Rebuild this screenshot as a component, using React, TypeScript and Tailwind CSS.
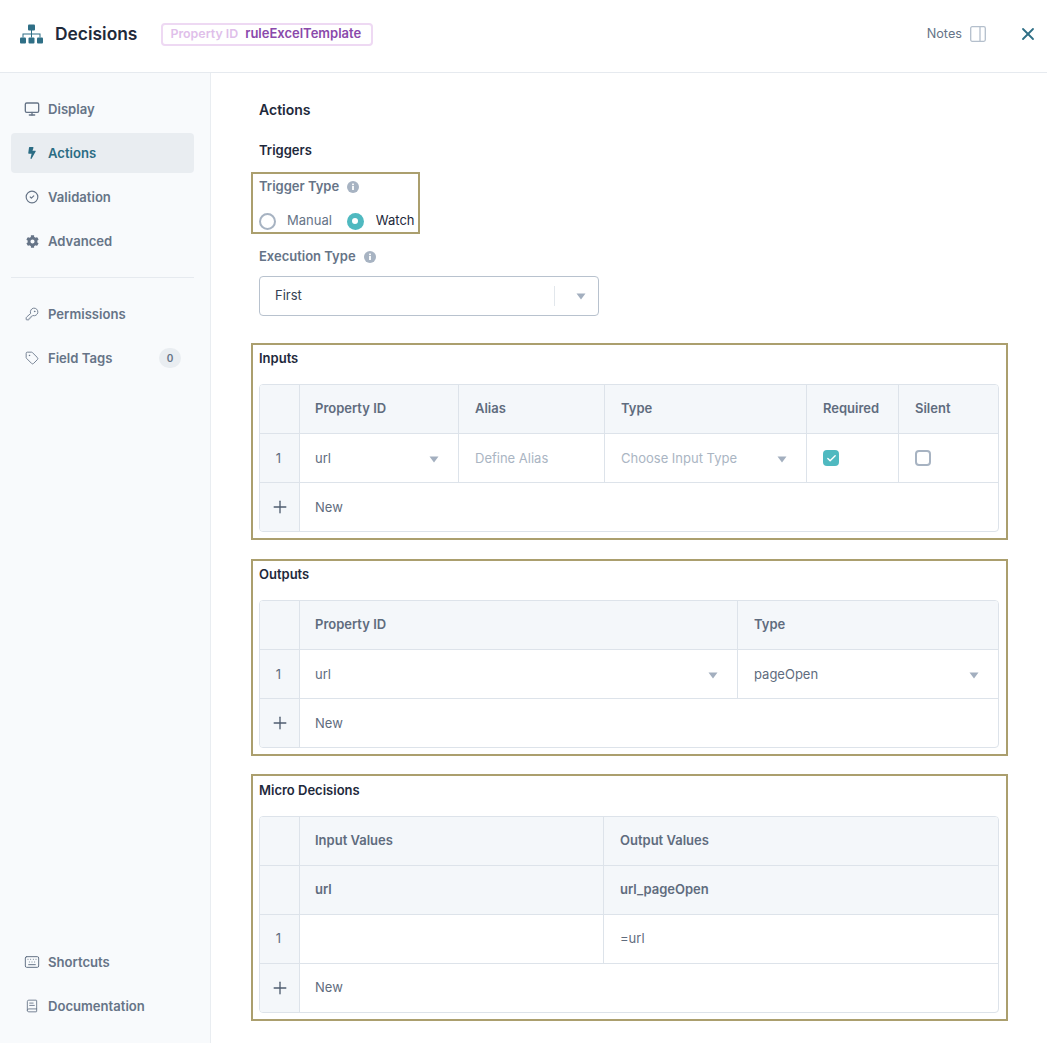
import React from "react";
import { Monitor, CircleCheck, KeyRound, Tag, Keyboard, BookText, X, Plus, Check } from "lucide-react";
import { FaCog, FaBolt } from "react-icons/fa";

function Caret({ className = "" }: { className?: string }) {
  return (
    <svg width="10" height="7" viewBox="0 0 10 7" className={className}>
      <path d="M0.5 0.5h9L5 6.500z" fill="#a3afbf" />
    </svg>
  );
}

function Info() {
  return (
    <svg width="12" height="12" viewBox="0 0 12 12">
      <circle cx="6" cy="6" r="6" fill="#a7b3c2" />
      <rect x="5.1" y="5" width="1.8" height="4" fill="#fff" />
      <rect x="5.1" y="2.6" width="1.8" height="1.6" fill="#fff" />
    </svg>
  );
}

function OrgIcon() {
  return (
    <svg width="23" height="20" viewBox="0 0 23 20" fill="#2f6f86">
      <rect x="8" y="0.5" width="7" height="6" rx="1" />
      <rect x="0" y="13.5" width="6" height="6" rx="1" />
      <rect x="8.5" y="13.5" width="6" height="6" rx="1" />
      <rect x="17" y="13.5" width="6" height="6" rx="1" />
      <path d="M11 6h1v3.5h8.5v4h-1V10.500H12v3h-1v-3H3.500v3h-1v-4H11z" />
    </svg>
  );
}

function NavItem({ icon, label, active, badge }: { icon: React.ReactNode; label: string; active?: boolean; badge?: string }) {
  return (
    <div className={`flex h-10 items-center rounded pl-[13px] pr-[13px] ${active ? "bg-[#e9edf1] text-[#2b6c84]" : "text-[#667487]"}`}>
      <span className="flex w-[16px] justify-center">{icon}</span>
      <span className="ml-[8px] flex-1 pt-[2px] text-[13.1px] font-semibold">{label}</span>
      {badge && (
        <span className="flex h-[20px] w-[22px] items-center justify-center rounded-full bg-[#e9edf1] text-[10px] font-semibold text-[#667487]">{badge}</span>
      )}
    </div>
  );
}

function Section({ title, children, className = "pt-[3px]" }: { title: string; children: React.ReactNode; className?: string }) {
  return (
    <section className={`-ml-[8px] -mr-[9px] border-2 border-[#ab9f6e] pb-[6px] pl-[6px] pr-[7px] ${className}`}>
      <h3 className="mb-[16px] text-[13px] font-semibold leading-[20px] text-[#1e293b]">{title}</h3>
      <div className="overflow-hidden rounded border border-[#dde3ea] text-[13px] text-[#5f6c7e]">{children}</div>
    </section>
  );
}

function Row({ children, last, index, head, flat }: { children?: React.ReactNode; last?: boolean; index?: React.ReactNode; head?: boolean; flat?: boolean }) {
  return (
    <div className={`flex ${last ? "h-[48px]" : "h-[49px] border-b border-[#dde3ea]"} ${head ? "bg-[#f4f7fa]" : ""}`}>
      <div className="flex w-[40px] shrink-0 items-center justify-center border-r border-[#dde3ea] bg-[#f4f7fa] text-[#5f6c7e]">
        {typeof index === "string" ? <span className={`pr-[2px] ${flat ? "" : "pt-[2px]"}`}>{index}</span> : index}
      </div>
      {children}
    </div>
  );
}

function Cell({ className = "", children, head, right, first, flat }: { className?: string; children?: React.ReactNode; head?: boolean; right?: boolean; first?: boolean; flat?: boolean }) {
  return (
    <div className={`flex items-center ${first ? "pl-[15px]" : "pl-[16px]"} ${right ? "border-r border-[#dde3ea]" : ""} ${head ? "font-semibold" : ""} ${head || flat ? "" : "pt-[2px]"} ${className}`}>{children}</div>
  );
}

function NewRow({ flat }: { flat?: boolean }) {
  return (
    <Row last index={<Plus size={20} strokeWidth={1.6} className="text-[#4f5d70]" />}>
      <Cell first flat={flat}>New</Cell>
    </Row>
  );
}

export default function App() {
  return (
    <div className="flex h-screen w-full flex-col overflow-hidden bg-white font-['Inter',sans-serif]">
      <header className="flex h-[73px] shrink-0 items-center border-b border-[#e6eaef] pb-[4px] pl-[20px] pr-[9px]">
        <OrgIcon />
        <h1 className="ml-[12px] text-[17.4px] font-semibold text-[#1f2a3a]">Decisions</h1>
        <div className="ml-[24px] flex h-[23px] items-center rounded border-2 border-[#eed9f3] pl-[7px] pr-[10px] font-semibold">
          <span className="text-[12.4px] text-[#e0bfea]">Property ID</span>
          <span className="ml-[7px] text-[13px] text-[#8a49ab]">ruleExcelTemplate</span>
        </div>
        <div className="ml-auto flex items-center text-[12.7px] text-[#667487]">
          Notes
          <svg width="16" height="16" viewBox="0 0 16 16" fill="none" stroke="#b4bfcc" strokeWidth="1.3" className="ml-[8px]">
            <rect x="0.7" y="0.7" width="14.6" height="14.6" rx="1.5" />
            <path d="M10 1v14" />
          </svg>
          <X size={20} strokeWidth={2.2} className="ml-[32px] text-[#2f6f86]" />
        </div>
      </header>

      <div className="flex min-h-0 flex-1">
        <aside className="flex w-[211px] shrink-0 flex-col border-r border-[#e9edf1] bg-[#f8fafc] pb-[17px] pl-[11px] pr-[16px] pt-[16px]">
          <nav className="flex flex-col gap-[4px]">
            <NavItem icon={<Monitor size={16} />} label="Display" />
            <NavItem active icon={<FaBolt size={12} />} label="Actions" />
            <NavItem icon={<CircleCheck size={14} />} label="Validation" />
            <NavItem icon={<FaCog size={13} />} label="Advanced" />
          </nav>
          <div className="my-[16px] border-t border-[#e6eaef]" />
          <nav className="flex flex-col gap-[4px]">
            <NavItem icon={<KeyRound size={14} strokeWidth={1.5} />} label="Permissions" />
            <NavItem icon={<Tag size={14} strokeWidth={1.5} />} label="Field Tags" badge="0" />
          </nav>
          <nav className="mt-auto flex flex-col gap-[4px]">
            <NavItem icon={<Keyboard size={16} strokeWidth={1.5} />} label="Shortcuts" />
            <NavItem icon={<BookText size={14} strokeWidth={1.5} />} label="Documentation" />
          </nav>
        </aside>

        <main className="min-w-0 flex-1 pl-[48px] pr-[48px] pt-[25px]">
          <h2 className="text-[14px] font-semibold leading-[24px] text-[#1e293b]">Actions</h2>
          <h3 className="mt-[16px] text-[13px] font-semibold leading-[24px] text-[#1e293b]">Triggers</h3>

          <div className="mt-[10px] -ml-[8px] w-[169px] border-2 border-[#ab9f6e] pl-[6px] pt-[3px]">
            <div className="flex h-[20px] items-center gap-[8px] text-[13px] font-semibold text-[#667487]">
              Trigger Type <Info />
            </div>
            <div className="mt-[13px] flex h-[22px] items-center text-[13px]">
              <span className="h-[17px] w-[17px] rounded-full border-2 border-[#a7b3c2]" />
              <span className="ml-[11px] text-[#667487]">Manual</span>
              <span className="ml-[15px] flex h-[17px] w-[17px] items-center justify-center rounded-full bg-[#4fb9c0]">
                <span className="h-[6px] w-[6px] rounded-full bg-white" />
              </span>
              <span className="ml-[12px] text-[#1e293b]">Watch</span>
            </div>
          </div>

          <div className="mt-[13px] flex h-[20px] items-center gap-[8px] text-[13px] font-semibold text-[#667487]">
            Execution Type <Info />
          </div>
          <div className="mt-[9px] flex h-[40px] w-[340px] items-center rounded border border-[#b8c2ce] pl-[15px] text-[13px] text-[#334155]">
            <span className="flex-1">First</span>
            <span className="h-[20px] border-l border-[#e2e7ec]" />
            <Caret className="ml-[21px] mr-[12px]" />
          </div>

          <div className="mt-[27px] flex flex-col">
            <Section title="Inputs">
              <Row head>
                <Cell first head right className="w-[159px]">Property ID</Cell>
                <Cell head right className="w-[146px]">Alias</Cell>
                <Cell head right className="w-[202px]">Type</Cell>
                <Cell head right className="w-[92px]">Required</Cell>
                <Cell head className="flex-1">Silent</Cell>
              </Row>
              <Row index="1">
                <Cell first right className="w-[159px] justify-between pr-[19px]">url<Caret /></Cell>
                <Cell right className="w-[146px] text-[#aab5c3]">Define Alias</Cell>
                <Cell right className="w-[202px] justify-between pr-[19px] text-[#aab5c3]">Choose Input Type<Caret /></Cell>
                <Cell flat right className="w-[92px]">
                  <span className="flex h-4 w-4 items-center justify-center rounded-[4px] bg-[#4fb9c0]">
                    <Check size={11} strokeWidth={3} className="text-white" />
                  </span>
                </Cell>
                <Cell flat className="flex-1"><span className="h-4 w-4 rounded-[4px] border-2 border-[#a7b3c2]" /></Cell>
              </Row>
              <NewRow />
            </Section>

            <Section title="Outputs" className="mt-[19px] pt-[3px]">
              <Row head>
                <Cell first head right className="w-[438px]">Property ID</Cell>
                <Cell head className="flex-1">Type</Cell>
              </Row>
              <Row index="1">
                <Cell first right className="w-[438px] justify-between pr-[19px]">url<Caret /></Cell>
                <Cell className="flex-1 justify-between pr-[19px]">pageOpen<Caret /></Cell>
              </Row>
              <NewRow />
            </Section>

            <Section title="Micro Decisions" className="mt-[18px] pt-[4px]">
              <Row head>
                <Cell first head right className="w-[304px]">Input Values</Cell>
                <Cell head className="flex-1">Output Values</Cell>
              </Row>
              <Row head>
                <Cell first head right className="w-[304px]">url</Cell>
                <Cell head className="flex-1">url_pageOpen</Cell>
              </Row>
              <Row index="1" flat>
                <Cell flat first right className="w-[304px]" />
                <Cell flat className="flex-1">=url</Cell>
              </Row>
              <NewRow flat />
            </Section>
          </div>
        </main>
      </div>
    </div>
  );
}
